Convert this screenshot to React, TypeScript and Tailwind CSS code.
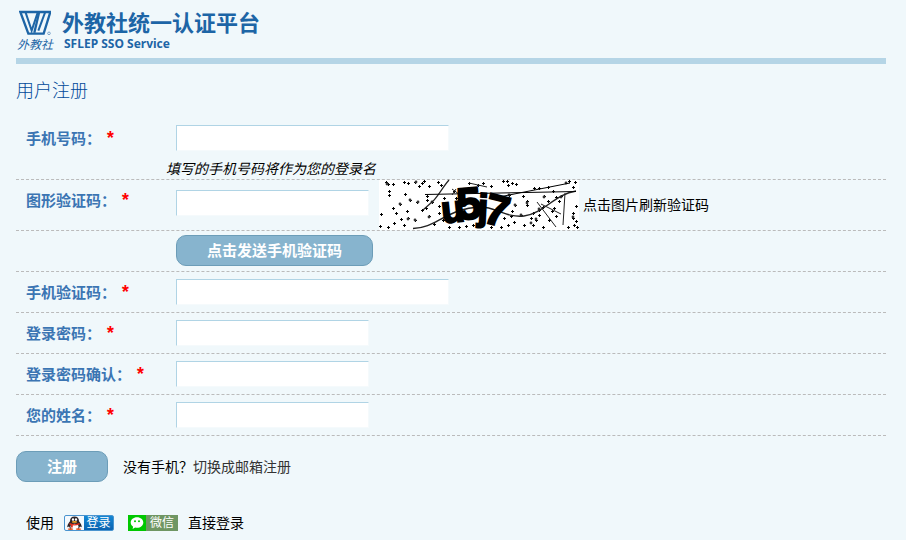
import React, { useState } from 'react';

const SPECKS: [number, number][] = [
  [7, 2], [9, 4], [14, 4], [25, 2], [29, 3], [10, 11], [10, 15], [26, 14], [36, 2], [40, 6], [43, 3], [45, 1],
  [50, 6], [59, 2], [62, 5], [38, 22], [21, 24], [31, 20], [14, 28], [28, 31], [43, 30], [15, 43], [22, 39],
  [25, 45], [29, 38], [36, 40], [50, 36], [55, 44], [2, 34], [1, 46], [9, 47], [48, 16], [48, 20], [53, 22],
  [47, 28], [60, 33], [64, 40], [70, 47], [60, 26], [65, 18], [77, 18], [75, 11], [17, 33], [80, 47], [87, 46],
  [94, 45], [90, 3], [99, 5], [124, 1], [129, 5], [133, 3], [137, 4], [128, 1], [144, 16], [136, 25], [148, 21],
  [148, 25], [130, 15], [133, 31], [132, 36], [129, 45], [135, 42], [145, 45], [142, 35], [152, 38], [154, 33],
  [154, 45], [157, 40], [160, 30], [164, 27], [160, 35], [165, 16], [169, 21], [164, 47], [170, 40], [173, 31],
  [177, 36], [180, 21], [175, 28], [194, 33], [194, 38], [197, 26], [195, 45], [198, 47], [190, 1], [194, 7],
  [196, 2], [169, 7], [155, 8], [160, 8], [174, 11], [177, 17], [182, 16], [112, 6], [104, 3], [125, 38],
  [122, 47], [197, 41], [189, 47], [112, 47],
];

const BLOTS: [number, number][] = [
  [8, 4], [21, 24], [39, 22], [29, 39], [36, 40], [53, 22], [50, 37], [37, 2], [148, 23], [130, 15], [136, 25],
  [142, 35], [160, 29], [165, 17], [157, 39], [187, 3], [194, 37], [182, 17], [152, 43], [31, 20],
];

const CaptchaImage: React.FC = () => (
  <svg width="200" height="50" viewBox="0 0 200 50" className="block overflow-visible bg-white" aria-hidden="true">
    <path
      d={SPECKS.map(([x, y]) => `M${x - 1} ${y + 0.5}h3M${x + 0.5} ${y - 1}v3`).join('')}
      stroke="#000" strokeWidth="1" shapeRendering="crispEdges"
    />
    {BLOTS.map(([x, y]) => <circle key={`${x}-${y}`} cx={x} cy={y} r="1.4" fill="#333" />)}
    <g fill="none" stroke="#222">
      <path d="M34 48.500C48 48 56 42 66 37S84 28 100 27S126 38 145 36S176 14 197 11" strokeWidth="1.400" />
      <path d="M70 0C63 8 58 18 53 22L44 30" strokeWidth="1.200" />
      <path d="M46 14.500L197 11.500" stroke="#000" />
      <path d="M115 18L191 3" stroke="#000" />
      <path d="M186 13L184 45M158 22L177 47M162 24L182 34" strokeWidth="1" />
      <path d="M73 9L92 23M90 3L108 7M73 15L77 9" />
    </g>
    <g
      fill="#000" stroke="#000" strokeWidth="2" fontWeight="700"
      fontFamily="'Liberation Sans Narrow', 'Liberation Sans', sans-serif" textAnchor="middle"
    >
      <text x="74" y="42" fontSize="38" transform="rotate(-6 74 32)">u</text>
      <text x="90" y="39" fontSize="45" transform="rotate(-5 90 24)">5</text>
      <text x="104" y="40" fontSize="37" transform="rotate(3 104 28)">j</text>
      <text x="118" y="45" fontSize="43" transform="rotate(14 118 31)">7</text>
    </g>
  </svg>
);

const LogoMark: React.FC = () => (
  <svg width="32" height="26" viewBox="0 0 96 78" fill="none" stroke="#1d65a6" aria-hidden="true">
    <path d="M4 6H94L74 71H28Z" strokeWidth="7" />
    <path d="M20 8L38 62L56 8" strokeWidth="6" />
    <path d="M60 8L46 68" strokeWidth="7" />
    <path d="M58 62L78 8" strokeWidth="6" />
    <circle cx="90" cy="70" r="4" strokeWidth="1.500" />
  </svg>
);

const QQIcon: React.FC = () => (
  <svg width="19" height="14" viewBox="0 0 19 14" aria-hidden="true">
    <path d="M9.500 0.500C6.500 0.500 5 2.600 5 5.200C3.500 7 2 9.500 2.300 11.300L4 10.500L5.500 13H13.500L15 10.500L16.700 11.300C17 9.500 15.500 7 14 5.200C14 2.600 12.500 0.500 9.500 0.500Z" fill="#2b2326" />
    <ellipse cx="9.500" cy="10.700" rx="4" ry="3" fill="#fff" />
    <ellipse cx="8" cy="3.600" rx="1.100" ry="1.400" fill="#fff" />
    <ellipse cx="11" cy="3.600" rx="1.100" ry="1.400" fill="#fff" />
    <ellipse cx="9.500" cy="5.900" rx="2.600" ry="0.900" fill="#f5a623" />
    <path d="M4.700 7Q9.500 9.300 14.300 7L14.700 8.400Q9.500 10.600 4.300 8.400Z" fill="#e0301e" />
    <path d="M6 9h1.800v2.500h-1.800z" fill="#e0301e" />
    <ellipse cx="5.500" cy="13.100" rx="2.800" ry="0.900" fill="#e8521f" />
    <ellipse cx="13.500" cy="13.100" rx="2.800" ry="0.900" fill="#e8521f" />
  </svg>
);

const WeChatIcon: React.FC = () => (
  <svg width="18" height="16" viewBox="0 0 18 16" aria-hidden="true">
    <path d="M9 2.200c-3.600 0-6.300 2.300-6.300 5.300 0 1.800 1 3.200 2.400 4.200L4.600 14l2.500-1.400c.6.200 1.200.2 1.900.2 3.600 0 6.300-2.300 6.300-5.300S12.600 2.200 9 2.200z" fill="#fff" />
    <circle cx="7" cy="6.200" r="1" fill="#00c800" />
    <circle cx="11" cy="6.200" r="1" fill="#00c800" />
  </svg>
);

interface RowProps {
  label?: string;
  htmlFor?: string;
  children: React.ReactNode;
}

const Row: React.FC<RowProps> = ({ label, htmlFor, children }) => (
  <div className="flex items-start border-b border-dashed border-[#bbbbbb]">
    <div className="w-[150px] shrink-0 pl-[10px]">
      {label && (
        <label htmlFor={htmlFor} className="mt-2 flex items-start gap-1 text-[15px] leading-[26px] font-bold text-[#3b75b3]">
          {label}
          <span className="font-['Liberation_Mono',monospace] text-lg leading-[26px] text-[#ff0000]">*</span>
        </label>
      )}
    </div>
    {children}
  </div>
);

const inputClass = 'block h-[26px] border border-t-[#b0d4e5] border-l-[#b0d4e5] border-r-[#f5fafc] border-b-[#f5fafc] bg-white px-1 text-sm outline-none';
const buttonClass = 'block h-[31px] rounded-[10px] border border-[#6c9db8] bg-[#87b4ce] px-[30px] text-[15px] font-bold text-white cursor-pointer';

const App: React.FC = () => {
  const [form, setForm] = useState({ phone: '', captcha: '', code: '', password: '', confirm: '', name: '' });

  const bind = (key: keyof typeof form) => ({
    id: key,
    value: form[key],
    onChange: (e: React.ChangeEvent<HTMLInputElement>) => setForm({ ...form, [key]: e.target.value }),
  });

  return (
    <div className="min-h-screen bg-[#f0f8fb] pr-5 pl-4 font-['Liberation_Sans','Noto_Sans_CJK_SC',sans-serif] text-sm text-black">
      <header className="flex h-16 items-start gap-2 border-b-[6px] border-[#b5d5e6] pt-[10px] text-[#1d65a6]">
        <div className="flex w-[38px] flex-col items-center">
          <LogoMark />
          <span className="text-xs leading-[18px] italic">外教社</span>
        </div>
        <div>
          <h1 className="text-[22px] leading-[27px] font-bold">外教社统一认证平台</h1>
          <p className="pl-[2px] font-['Noto_Sans',sans-serif] text-xs leading-[14px] font-bold">SFLEP SSO Service</p>
        </div>
      </header>

      <h2 className="text-lg leading-[54px] font-light text-[#004a99]">用户注册</h2>

      <form onSubmit={e => e.preventDefault()}>
        <Row label="手机号码：" htmlFor="phone">
          <div className="pt-[7px]">
            <input type="text" {...bind('phone')} className={`${inputClass} ml-[10px] w-[273px]`} />
            <em className="mt-2 block leading-5">填写的手机号码将作为您的登录名</em>
          </div>
        </Row>
        <Row label="图形验证码：" htmlFor="captcha">
          <div className="flex items-center">
            <input type="text" {...bind('captcha')} className={`${inputClass} mb-1 ml-[10px] w-[193px]`} />
            <button type="button" aria-label="点击图片刷新验证码" className="ml-[10px] cursor-pointer"><CaptchaImage /></button>
            <span className="ml-1">点击图片刷新验证码</span>
          </div>
        </Row>
        <Row>
          <div className="pt-1 pb-[5px] pl-[10px]">
            <button type="button" className={buttonClass}>点击发送手机验证码</button>
          </div>
        </Row>
        <Row label="手机验证码：" htmlFor="code">
          <div className="py-[7px] pl-[10px]">
            <input type="text" {...bind('code')} className={`${inputClass} w-[273px]`} />
          </div>
        </Row>
        <Row label="登录密码：" htmlFor="password">
          <div className="py-[7px] pl-[10px]">
            <input type="password" {...bind('password')} className={`${inputClass} w-[193px]`} />
          </div>
        </Row>
        <Row label="登录密码确认：" htmlFor="confirm">
          <div className="py-[7px] pl-[10px]">
            <input type="password" {...bind('confirm')} className={`${inputClass} w-[193px]`} />
          </div>
        </Row>
        <Row label="您的姓名：" htmlFor="name">
          <div className="py-[7px] pl-[10px]">
            <input type="text" {...bind('name')} className={`${inputClass} w-[193px]`} />
          </div>
        </Row>

        <div className="mt-[15px] flex items-center gap-[15px]">
          <button type="submit" className={buttonClass}>注册</button>
          <p>没有手机？<a href="#email" className="text-[#333333]">切换成邮箱注册</a></p>
        </div>
      </form>

      <div className="mt-[31px] flex items-center pl-[10px] leading-5">
        <span>使用</span>
        <a href="#qq" className="ml-[10px] flex h-4 w-[50px] overflow-hidden rounded-[2px] border border-[#4a94cf] bg-linear-to-b from-[#1487d4] to-[#0a63b0] text-xs leading-[14px] text-white">
          <span className="w-[19px] shrink-0 bg-[#f4f9fd]"><QQIcon /></span>
          <span className="flex-1 text-center">登录</span>
        </a>
        <a href="#wechat" className="ml-[14px] flex h-4 w-[50px] overflow-hidden bg-[#6f9663] text-xs leading-4 text-white">
          <span className="w-[18px] shrink-0 bg-[#00c800]"><WeChatIcon /></span>
          <span className="flex-1 text-center">微信</span>
        </a>
        <span className="ml-[10px]">直接登录</span>
      </div>
    </div>
  );
};

export default App;
